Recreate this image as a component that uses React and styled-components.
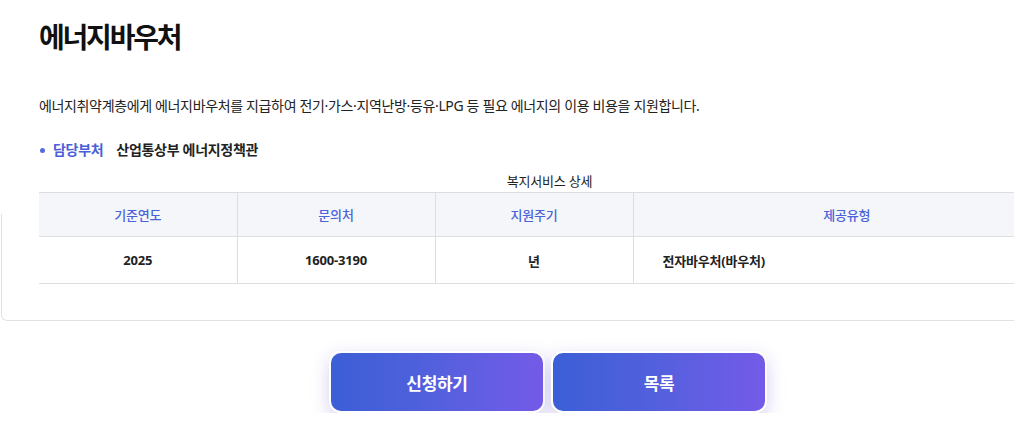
import React from 'react'
import styled, { createGlobalStyle } from 'styled-components'

const GlobalStyle = createGlobalStyle`
  html, body {
    margin: 0;
    padding: 0;
    background: #fff;
    overflow: hidden;
  }
  body {
    font-family: "Noto Sans", "Noto Sans CJK KR", sans-serif;
    color: #222;
  }
`

const columns = [
  { head: '기준연도', value: '2025', width: 198 },
  { head: '문의처', value: '1600-3190', width: 198 },
  { head: '지원주기', value: '년', width: 198 },
  { head: '제공유형', value: '전자바우처(바우처)', align: 'left' },
]

const App = () => {
  return (
    <>
      <GlobalStyle />
      <Page>
        <Title>에너지바우처</Title>
        <Description>
          에너지취약계층에게 에너지바우처를 지급하여 전기·가스·지역난방·등유·LPG 등 필요 에너지의 이용 비용을 지원합니다.
        </Description>
        <InfoList>
          <InfoItem>
            <InfoLabel>담당부처</InfoLabel>
            <InfoValue>산업통상부 에너지정책관</InfoValue>
          </InfoItem>
        </InfoList>

        <TableArea>
          <Table>
            <Caption>복지서비스 상세</Caption>
            <colgroup>
              {columns.map((c) => (
                <col key={c.head} style={c.width ? { width: c.width } : undefined} />
              ))}
            </colgroup>
            <thead>
              <tr>
                {columns.map((c) => (
                  <Th key={c.head}>{c.head}</Th>
                ))}
              </tr>
            </thead>
            <tbody>
              <tr>
                {columns.map((c) => (
                  <Td key={c.head} $align={c.align}>{c.value}</Td>
                ))}
              </tr>
            </tbody>
          </Table>
        </TableArea>

        <ButtonRow>
          <ActionButton>신청하기</ActionButton>
          <ActionButton>목록</ActionButton>
        </ButtonRow>
      </Page>
    </>
  )
}

export default App

const Page = styled.div`
  width: 1100px;
  padding: 17px 0 0 39px;
  box-sizing: border-box;
`

const Title = styled.h1`
  margin: 0;
  font-size: 28px;
  font-weight: 700;
  line-height: 40px;
  color: #111;
  letter-spacing: -2.2px;
`

const Description = styled.p`
  margin: 39px 0 0;
  font-size: 14px;
  line-height: 20px;
  color: #222;
  letter-spacing: -0.35px;
`

const InfoList = styled.ul`
  list-style: none;
  margin: 24px 0 0;
  padding: 0;
`

const InfoItem = styled.li`
  display: flex;
  align-items: center;
  font-size: 14px;
  line-height: 20px;
  position: relative;
  padding-left: 14px;
  letter-spacing: -0.3px;

  &::before {
    content: '';
    position: absolute;
    left: 1px;
    top: 8px;
    width: 5px;
    height: 5px;
    border-radius: 50%;
    background: #5a69df;
  }
`

const InfoLabel = styled.span`
  color: #4b5fd8;
  font-weight: 700;
  margin-right: 13px;
`

const InfoValue = styled.span`
  color: #222;
  font-weight: 700;
`

const TableArea = styled.div`
  position: relative;
  margin: 11px 0 0 -39px;
  padding: 0 0 37px 39px;

  &::before {
    content: '';
    position: absolute;
    left: 1px;
    top: 43px;
    right: -60px;
    bottom: 0;
    border: 1px solid #e2e2e2;
    border-top: none;
    border-radius: 0 0 6px 6px;
    pointer-events: none;
  }
`

const Table = styled.table`
  width: 1021px;
  border-collapse: collapse;
  table-layout: fixed;
  font-size: 13px;
  letter-spacing: -0.2px;
`

const Caption = styled.caption`
  font-size: 13px;
  line-height: 20px;
  color: #222;
  padding-bottom: 1px;
`

const Th = styled.th`
  height: 43px;
  background: #f5f6fa;
  color: #4a63d9;
  font-weight: 500;
  border-top: 1px solid #dedede;
  border-bottom: 1px solid #dedede;
  border-left: 1px solid #dedede;
  padding: 0;

  &:first-child {
    border-left: none;
  }
`

const Td = styled.td`
  height: 46px;
  padding: 0 0 0 ${(p) => (p.$align === 'left' ? '29px' : '0')};
  text-align: ${(p) => p.$align || 'center'};
  font-weight: 700;
  color: #222;
  border-bottom: 1px solid #dedede;
  border-left: 1px solid #dedede;

  &:first-child {
    border-left: none;
  }
`

const ButtonRow = styled.div`
  width: 1018px;
  display: flex;
  justify-content: center;
  gap: 6px;
  margin-top: 30px;
`

const ActionButton = styled.button`
  width: 216px;
  height: 62px;
  border: 2px solid #fff;
  border-radius: 12px;
  background: linear-gradient(90deg, #3b5fd6 0%, #5460de 50%, #745be8 100%);
  color: #fff;
  font-family: inherit;
  font-size: 17px;
  font-weight: 700;
  letter-spacing: -0.3px;
  box-shadow: 0 6px 18px rgba(96, 90, 200, 0.28);
  cursor: pointer;
`
